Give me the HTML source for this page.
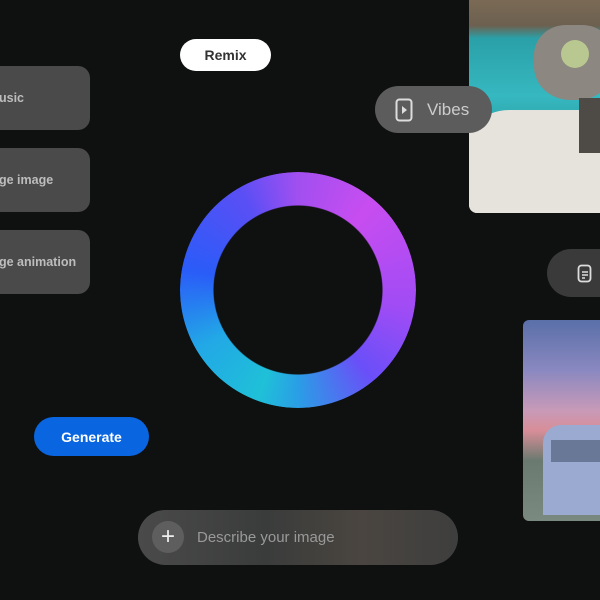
<!DOCTYPE html>
<html><head><style>
*{margin:0;padding:0;box-sizing:border-box}
body{width:600px;height:600px;background:#0f1010;overflow:hidden;position:relative;font-family:"Liberation Sans",sans-serif}
.card{position:absolute;left:-20px;width:110px;height:64px;background:#4a4a4a;border-radius:12px;color:#bdbdbd;font-weight:bold;font-size:12.5px;display:flex;align-items:center;padding-left:19px;white-space:nowrap;overflow:hidden}
.ring{position:absolute;left:180px;top:172px;width:236px;height:236px;border-radius:50%;
background:conic-gradient(from 0deg,#a24ff0 0deg,#c84df0 40deg,#a04cf5 100deg,#6a4ff8 140deg,#2a9ee6 180deg,#1fc0d8 200deg,#22a8e6 240deg,#2a5cf8 280deg,#5a4ff5 330deg,#a24ff0 360deg);
-webkit-mask:radial-gradient(circle,transparent 84px,#000 85px);mask:radial-gradient(circle,transparent 84px,#000 85px)}
</style></head><body>
<div class="card" style="top:66px">usic</div>
<div class="card" style="top:148px">ge image</div>
<div class="card" style="top:230px">ge animation</div>
<div style="position:absolute;left:180px;top:39px;width:91px;height:32px;background:#fff;border-radius:16px;font-weight:bold;font-size:14px;color:#333;display:flex;align-items:center;justify-content:center">Remix</div>
<div class="ring"></div>
<div style="position:absolute;left:469px;top:0;width:140px;height:213px;border-radius:0 0 0 8px;overflow:hidden;background:linear-gradient(180deg,#7a6a55 0,#6d6050 12%,#2aa0a8 18%,#36b8c0 45%,#2aa0a8 62%,#ddd8d0 70%,#c8c2ba 100%)">
 <div style="position:absolute;left:-10px;top:110px;width:170px;height:120px;background:#e6e2dc;border-radius:50px 50px 0 0"></div>
 <div style="position:absolute;left:65px;top:25px;width:80px;height:75px;background:#8c8780;border-radius:40% 40% 45% 45%"></div>
 <div style="position:absolute;left:110px;top:98px;width:30px;height:55px;background:#4e4a45"></div>
 <div style="position:absolute;left:92px;top:40px;width:28px;height:28px;border-radius:50%;background:#b8c890"></div>
</div>
<div style="position:absolute;left:375px;top:86px;width:117px;height:47px;background:#5c5c5c;border-radius:24px;color:#ccc;font-size:17px;display:flex;align-items:center;padding-left:52px">Vibes
 <svg style="position:absolute;left:20px;top:12px" width="18" height="24" viewBox="0 0 18 24"><rect x="1.5" y="1.5" width="15" height="21" rx="3" fill="none" stroke="#ddd" stroke-width="2"/><path d="M7 8l5 4-5 4z" fill="#ddd"/></svg></div>
<div style="position:absolute;left:547px;top:249px;width:80px;height:48px;background:#3a3a3a;border-radius:24px">
 <svg style="position:absolute;left:30px;top:15px" width="16" height="19" viewBox="0 0 16 19"><rect x="1.5" y="1.5" width="12" height="16" rx="3" fill="none" stroke="#ddd" stroke-width="1.8"/><path d="M5 8h6M5 11h6M5 14h3" stroke="#ddd" stroke-width="1.5"/></svg></div>
<div style="position:absolute;left:523px;top:320px;width:90px;height:201px;border-radius:6px 0 0 6px;overflow:hidden;background:linear-gradient(180deg,#5a6fa8 0,#8a88c0 25%,#c89ab8 45%,#d88e98 55%,#6a7a70 70%,#7a8a80 100%)">
 <div style="position:absolute;left:20px;top:105px;width:80px;height:90px;background:#9aaad0;border-radius:18px 0 0 0"></div>
 <div style="position:absolute;left:28px;top:120px;width:70px;height:22px;background:#6a7898"></div>
</div>
<div style="position:absolute;left:34px;top:417px;width:115px;height:39px;background:#0a66e0;border-radius:20px;color:#fff;font-weight:bold;font-size:14px;display:flex;align-items:center;justify-content:center">Generate</div>
<div style="position:absolute;left:138px;top:510px;width:320px;height:55px;border-radius:28px;background:linear-gradient(90deg,#4a4a4a,#3a3c3b 40%,#4a4540 70%,#3e3e3e)">
 <div style="position:absolute;left:14px;top:11px;width:32px;height:32px;border-radius:50%;background:#5e5e5e;color:#eee;font-size:24px;line-height:31px;text-align:center">+</div>
 <div style="position:absolute;left:59px;top:19px;color:#999;font-size:15px">Describe your image</div>
</div>
</body></html>
